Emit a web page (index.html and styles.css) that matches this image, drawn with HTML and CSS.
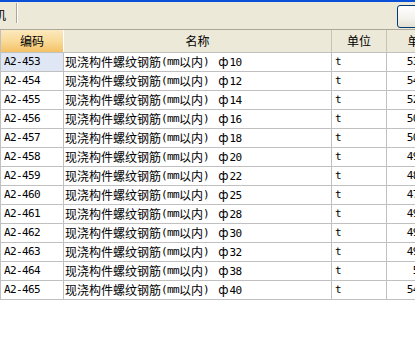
FILE: index.html
```html
<!DOCTYPE html>
<html lang="zh-CN">
<head>
<meta charset="utf-8">
<title>定额</title>
<link rel="stylesheet" href="styles.css">
</head>
<body>
<div class="page">
  <div class="titlebar"></div>
  <div class="toolbar">
    <span class="cut-char">机</span>
    <span class="sep"></span>
    <span class="btn"></span>
  </div>
  <div class="grid">
    <div class="row head">
      <div class="c c1 sel-head">编码</div>
      <div class="c c2">名称</div>
      <div class="c c3">单位</div>
      <div class="c c4">单价</div>
    </div>
    <div class="row"><div class="c c1 code cur">A2-453</div><div class="c c2 name">现浇构件螺纹钢筋<span class="lat">(mm</span>以内<span class="lat">)</span><span class="dia"><span class="phi">ф</span>10</span></div><div class="c c3 unit">t</div><div class="c c4 num">5384.51</div></div>
    <div class="row"><div class="c c1 code">A2-454</div><div class="c c2 name">现浇构件螺纹钢筋<span class="lat">(mm</span>以内<span class="lat">)</span><span class="dia"><span class="phi">ф</span>12</span></div><div class="c c3 unit">t</div><div class="c c4 num">5460.72</div></div>
    <div class="row"><div class="c c1 code">A2-455</div><div class="c c2 name">现浇构件螺纹钢筋<span class="lat">(mm</span>以内<span class="lat">)</span><span class="dia"><span class="phi">ф</span>14</span></div><div class="c c3 unit">t</div><div class="c c4 num">5264.10</div></div>
    <div class="row"><div class="c c1 code">A2-456</div><div class="c c2 name">现浇构件螺纹钢筋<span class="lat">(mm</span>以内<span class="lat">)</span><span class="dia"><span class="phi">ф</span>16</span></div><div class="c c3 unit">t</div><div class="c c4 num">5072.55</div></div>
    <div class="row"><div class="c c1 code">A2-457</div><div class="c c2 name">现浇构件螺纹钢筋<span class="lat">(mm</span>以内<span class="lat">)</span><span class="dia"><span class="phi">ф</span>18</span></div><div class="c c3 unit">t</div><div class="c c4 num">5031.45</div></div>
    <div class="row"><div class="c c1 code">A2-458</div><div class="c c2 name">现浇构件螺纹钢筋<span class="lat">(mm</span>以内<span class="lat">)</span><span class="dia"><span class="phi">ф</span>20</span></div><div class="c c3 unit">t</div><div class="c c4 num">4987.72</div></div>
    <div class="row"><div class="c c1 code">A2-459</div><div class="c c2 name">现浇构件螺纹钢筋<span class="lat">(mm</span>以内<span class="lat">)</span><span class="dia"><span class="phi">ф</span>22</span></div><div class="c c3 unit">t</div><div class="c c4 num">4893.68</div></div>
    <div class="row"><div class="c c1 code">A2-460</div><div class="c c2 name">现浇构件螺纹钢筋<span class="lat">(mm</span>以内<span class="lat">)</span><span class="dia"><span class="phi">ф</span>25</span></div><div class="c c3 unit">t</div><div class="c c4 num">4765.22</div></div>
    <div class="row"><div class="c c1 code">A2-461</div><div class="c c2 name">现浇构件螺纹钢筋<span class="lat">(mm</span>以内<span class="lat">)</span><span class="dia"><span class="phi">ф</span>28</span></div><div class="c c3 unit">t</div><div class="c c4 num">4921.10</div></div>
    <div class="row"><div class="c c1 code">A2-462</div><div class="c c2 name">现浇构件螺纹钢筋<span class="lat">(mm</span>以内<span class="lat">)</span><span class="dia"><span class="phi">ф</span>30</span></div><div class="c c3 unit">t</div><div class="c c4 num">4915.49</div></div>
    <div class="row"><div class="c c1 code">A2-463</div><div class="c c2 name">现浇构件螺纹钢筋<span class="lat">(mm</span>以内<span class="lat">)</span><span class="dia"><span class="phi">ф</span>32</span></div><div class="c c3 unit">t</div><div class="c c4 num">4932.80</div></div>
    <div class="row"><div class="c c1 code">A2-464</div><div class="c c2 name">现浇构件螺纹钢筋<span class="lat">(mm</span>以内<span class="lat">)</span><span class="dia"><span class="phi">ф</span>38</span></div><div class="c c3 unit">t</div><div class="c c4 num">5012.6</div></div>
    <div class="row"><div class="c c1 code">A2-465</div><div class="c c2 name">现浇构件螺纹钢筋<span class="lat">(mm</span>以内<span class="lat">)</span><span class="dia"><span class="phi">ф</span>40</span></div><div class="c c3 unit">t</div><div class="c c4 num">5418.37</div></div>
  </div>
</div>
</body>
</html>
```

FILE: styles.css
```css
html, body {
  margin: 0;
  padding: 0;
  background: #ffffff;
}

.page {
  width: 415px;
  height: 354px;
  overflow: hidden;
  font-family: "Noto Sans CJK SC", "DejaVu Sans", sans-serif;
  font-size: 12px;
  color: #000000;
}

.titlebar {
  height: 2px;
  background: #0a4fd8;
}

.toolbar {
  height: 27px;
  background: #ece9d8;
  border-bottom: 1px solid #aca899;
  display: flex;
  align-items: flex-start;
  overflow: hidden;
}

.cut-char {
  margin-left: -6px;
  margin-top: 5px;
  line-height: 16px;
  font-size: 12px;
  width: 15px;
  flex-shrink: 0;
}

.sep {
  width: 1px;
  height: 20px;
  margin-top: 1px;
  margin-left: 7px;
  background: #aca899;
  border-right: 1px solid #ffffff;
  flex-shrink: 0;
}

.btn {
  margin-left: auto;
  margin-right: -20px;
  margin-top: 3px;
  width: 36px;
  height: 21px;
  flex-shrink: 0;
  border: 1px solid #003c74;
  border-radius: 3px;
  background: linear-gradient(#ffffff, #f3f2ec 60%, #e3e0d3);
}

.grid {
  width: 453px;
  border-left: 1px solid #c0c0c0;
}

.row {
  display: grid;
  grid-template-columns: 63px 268px 55px 66px;
  height: 18px;
  border-bottom: 1px solid #c0c0c0;
}

.row.head {
  height: 22px;
  background: #ece9d8;
}

.c {
  border-right: 1px solid #c0c0c0;
  display: flex;
  align-items: center;
  white-space: nowrap;
  overflow: hidden;
  line-height: 18px;
}

.head .c {
  justify-content: center;
  line-height: 22px;
  border-right-color: #c7c5b2;
}

.head .sel-head {
  background: linear-gradient(#fbe9bf, #f9d894 55%, #f4c165);
  border-right-color: #ffffff;
}

.code, .lat, .dia, .unit, .num {
  font-family: "DejaVu Sans Mono", "Liberation Mono", monospace;
  font-size: 11px;
  letter-spacing: -0.6px;
}

.code {
  padding-left: 3px;
}

.cur {
  background: #dfe7f5;
}

.name {
  padding-left: 1px;
}

.dia {
  margin-left: 9px;
}

.phi {
  font-family: "DejaVu Sans", sans-serif;
  font-size: 12px;
  letter-spacing: 0;
  margin-right: 1px;
}

.unit {
  padding-left: 3px;
}

.num {
  justify-content: flex-end;
  padding-right: 3px;
}
```
